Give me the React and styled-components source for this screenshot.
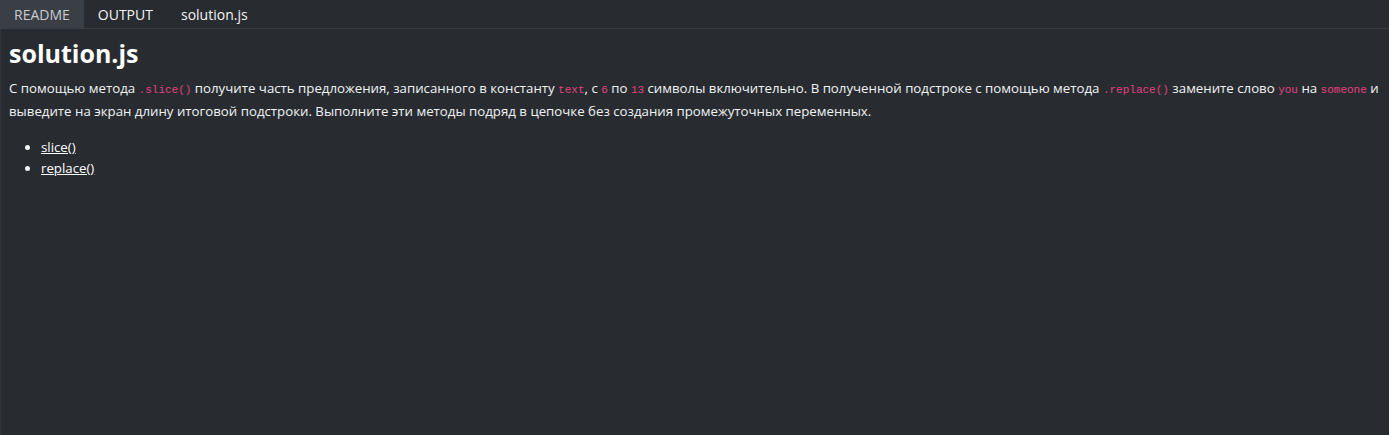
import React from "react";
import styled, { createGlobalStyle } from "styled-components";

const Global = createGlobalStyle`
  html, body { margin: 0; padding: 0; background: #282c31; }
  body { font-family: "Open Sans", "Noto Sans", sans-serif; color: #f1f3f5; }
  #root { min-height: 435px; }
`;

const Page = styled.div`
  display: flex;
  flex-direction: column;
  height: 435px;
  background: #282c31;
`;

const TabBar = styled.div`
  display: flex;
  height: 28px;
  border-bottom: 1px solid #3b3f45;
  flex-shrink: 0;
`;

const Tab = styled.div`
  display: flex;
  align-items: center;
  padding: 0 14px;
  font-size: 14px;
  color: ${(p) => (p.$active ? "#c9ccd1" : "#f3f4f6")};
  background: ${(p) => (p.$active ? "#3a3f46" : "transparent")};
`;

const Content = styled.div`
  flex: 1;
  border-left: 1px solid #33373d;
  padding: 9px 8px 0 8px;
`;

const Title = styled.h1`
  margin: 0 0 9px 0;
  font-size: 25px;
  font-weight: 700;
  line-height: 1.2;
  color: #ffffff;
`;

const Para = styled.p`
  margin: 0 0 14px 0;
  font-size: 13.25px;
  line-height: 23px;
`;

const Code = styled.code`
  font-family: "Liberation Mono", "DejaVu Sans Mono", monospace;
  font-size: 11px;
  line-height: 1;
  color: #e4407f;
`;

const List = styled.ul`
  margin: 0;
  padding-left: 32px;
  font-size: 13.25px;
  line-height: 21px;
`;

const Link = styled.a`
  color: #ffffff;
  text-decoration: underline;
`;

export default function App() {
  return (
    <Page>
      <Global />
      <TabBar>
        <Tab $active>README</Tab>
        <Tab>OUTPUT</Tab>
        <Tab>solution.js</Tab>
      </TabBar>
      <Content>
        <Title>solution.js</Title>
        <Para>
          С помощью метода <Code>.slice()</Code> получите часть предложения, записанного в константу{" "}
          <Code>text</Code>, с <Code>6</Code> по <Code>13</Code> символы включительно. В полученной подстроке с
          помощью метода <Code>.replace()</Code> замените слово <Code>you</Code> на <Code>someone</Code> и
          выведите на экран длину итоговой подстроки. Выполните эти методы подряд в цепочке без создания
          промежуточных переменных.
        </Para>
        <List>
          <li><Link href="#">slice()</Link></li>
          <li><Link href="#">replace()</Link></li>
        </List>
      </Content>
    </Page>
  );
}
